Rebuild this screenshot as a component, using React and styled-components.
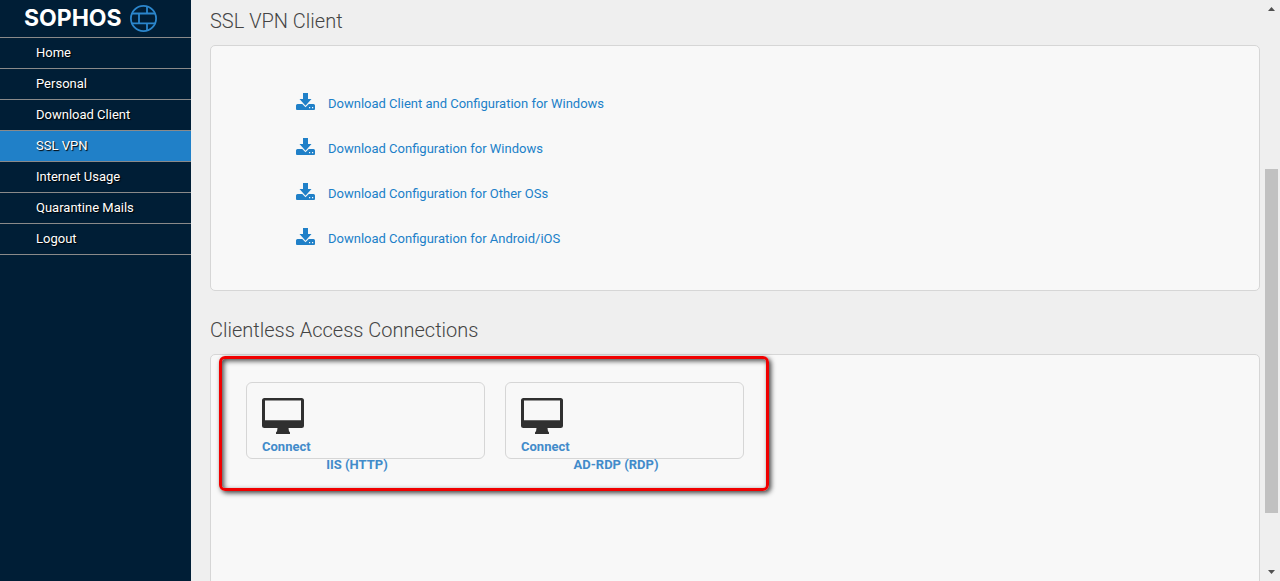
import React from "react";
import styled, { createGlobalStyle } from "styled-components";

const GlobalStyle = createGlobalStyle`
  *, *::before, *::after { box-sizing: border-box; }
  body {
    margin: 0;
    background: #efefef;
    color: #333;
    font-family: Roboto, "Liberation Sans", sans-serif;
    font-size: 13px;
    line-height: 18px;
  }
  a { text-decoration: none; }
`;

const Shell = styled.div`
  display: flex;
  height: 100vh;
  overflow: hidden;
`;

const Sidebar = styled.aside`
  flex: none;
  width: 191px;
  background: #001e36;
`;

const Brand = styled.a`
  display: flex;
  align-items: center;
  gap: 8px;
  height: 38px;
  padding-left: 24px;
  border-bottom: 1px solid #8a8a8a;
  color: #fff;
  font-family: Inter, "Liberation Sans", sans-serif;
  font-size: 23px;
  font-weight: 700;
  line-height: 37px;
`;

const NavLink = styled.a`
  display: block;
  height: 31px;
  padding: 6px 0 6px 36px;
  border-bottom: 1px solid #8a8a8a;
  background: ${(p) => (p.$active ? "#2080c8" : "transparent")};
  color: #fff;
  text-shadow: 1px 1px 1px #000;
`;

const Main = styled.main`
  flex: 1;
  min-width: 0;
  padding: 8px 5px 0 19px;
`;

const Heading = styled.h2`
  margin: 0 0 11px;
  color: #444;
  font-size: 20px;
  font-weight: 300;
  line-height: 26px;
`;

const Panel = styled.section`
  position: relative;
  min-height: 246px;
  padding: ${(p) => p.$padding};
  margin-bottom: 26px;
  border: 1px solid #d6d6d6;
  border-radius: 5px;
  background: #f8f8f8;
`;

const DownloadList = styled.ul`
  display: flex;
  flex-direction: column;
  gap: 23px;
  margin: 0;
  padding: 0;
  list-style: none;
`;

const DownloadLink = styled.a`
  display: flex;
  align-items: center;
  gap: 13px;
  width: fit-content;
  height: 22px;
  color: #2080c8;
`;

const DownloadSvg = styled.svg`
  flex: none;
  margin-bottom: 5px;
`;

const Connections = styled.div`
  display: flex;
  gap: 20px;
`;

const Connection = styled.div`
  flex: 0 1 239px;
  color: #428bca;
  font-weight: 700;
`;

const Card = styled.div`
  height: 77px;
  padding: 15px;
  border: 1px solid #d6d6d6;
  border-radius: 6px;
`;

const ConnectLink = styled.a`
  display: inline-flex;
  flex-direction: column;
  gap: 4px;
  color: inherit;
`;

const ConnectionName = styled.div`
  margin-top: -3px;
  padding-right: 17px;
  text-align: center;
`;

const Highlight = styled.div`
  position: absolute;
  top: 1px;
  left: 8px;
  width: 550px;
  height: 135px;
  border: 3px solid #f00000;
  border-radius: 6px;
  box-shadow: 2px 2px 5px rgba(0, 0, 0, 0.75), inset 2px 2px 5px rgba(0, 0, 0, 0.7);
  pointer-events: none;
`;

const ScrollTrack = styled.div`
  flex: none;
  display: flex;
  flex-direction: column;
  align-items: center;
  width: 15px;
  padding: 7px 2px 7px 0;
`;

const Spacer = styled.div`
  flex: ${(p) => p.$grow} 1 0;
`;

const ScrollThumb = styled.div`
  flex: 344 1 0;
  width: 13px;
  background: #c1c1c1;
`;

const NAV = [
  "Home",
  "Personal",
  "Download Client",
  "SSL VPN",
  "Internet Usage",
  "Quarantine Mails",
  "Logout",
];

const DOWNLOADS = [
  "Download Client and Configuration for Windows",
  "Download Configuration for Windows",
  "Download Configuration for Other OSs",
  "Download Configuration for Android/iOS",
];

const CONNECTIONS = ["IIS (HTTP)", "AD-RDP (RDP)"];

function GlobeIcon() {
  return (
    <svg width="27" height="27" viewBox="0 0 27 27" fill="none" stroke="#2b86cc" strokeWidth="1.8" aria-hidden="true">
      <circle cx="13.5" cy="13.5" r="12.6" />
      <path d="M2 8.500H25M2 18.300H25M9 8.500V18.300M17 1.500V8.500M17 18.300V25.500" />
    </svg>
  );
}

function DownloadIcon() {
  return (
    <DownloadSvg width="19" height="17" viewBox="0 0 19 17" fill="#2080c8" aria-hidden="true">
      <path d="M7 0H12V6H15.500L9.500 12.700L3.500 6H7Z" />
      <path
        fillRule="evenodd"
        d="M1.500 11H6.300L9.500 14.300L12.700 11H17.500Q19 11 19 12.500V16Q19 17 18 17H1Q0 17 0 16V12.500Q0 11 1.500 11ZM13 14V15.200H14.200V14ZM16 14V15.200H17.200V14Z"
      />
    </DownloadSvg>
  );
}

function MonitorIcon() {
  return (
    <svg width="42" height="36" viewBox="0 0 42 36" fill="#303030" aria-hidden="true">
      <path
        fillRule="evenodd"
        d="M2.500 0H39.500Q42 0 42 2.500V27.500Q42 30 39.500 30H26.500Q26.500 33 28 34.500V36H14V34.500Q15.500 33 15.500 30H2.500Q0 30 0 27.500V2.500Q0 0 2.500 0ZM3 2.500V22.300H39V2.500Z"
      />
    </svg>
  );
}

function Arrow({ up }) {
  return (
    <svg width="7" height="4" viewBox="0 0 7 4" fill="#505050" aria-hidden="true">
      <path d={up ? "M0 4L3.500 0L7 4Z" : "M0 0L3.500 4L7 0Z"} />
    </svg>
  );
}

export default function App() {
  return (
    <>
      <GlobalStyle />
      <Shell>
        <Sidebar>
          <Brand href="#home">
            SOPHOS
            <GlobeIcon />
          </Brand>
          <nav>
            {NAV.map((label) => (
              <NavLink key={label} href="#nav" $active={label === "SSL VPN"}>
                {label}
              </NavLink>
            ))}
          </nav>
        </Sidebar>
        <Main>
          <Heading>SSL VPN Client</Heading>
          <Panel $padding="47px 85px 40px">
            <DownloadList>
              {DOWNLOADS.map((label) => (
                <li key={label}>
                  <DownloadLink href="#download">
                    <DownloadIcon />
                    {label}
                  </DownloadLink>
                </li>
              ))}
            </DownloadList>
          </Panel>
          <Heading>Clientless Access Connections</Heading>
          <Panel $padding="27px 35px">
            <Connections>
              {CONNECTIONS.map((name) => (
                <Connection key={name}>
                  <Card>
                    <ConnectLink href="#connect">
                      <MonitorIcon />
                      Connect
                    </ConnectLink>
                  </Card>
                  <ConnectionName>{name}</ConnectionName>
                </Connection>
              ))}
            </Connections>
            <Highlight />
          </Panel>
        </Main>
        <ScrollTrack>
          <Arrow up />
          <Spacer $grow={158} />
          <ScrollThumb />
          <Spacer $grow={57} />
          <Arrow />
        </ScrollTrack>
      </Shell>
    </>
  );
}
